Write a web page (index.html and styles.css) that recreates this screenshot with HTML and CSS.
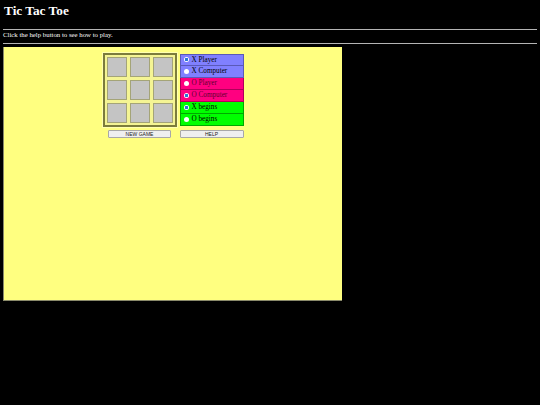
FILE: index.html
```html
<!DOCTYPE html>
<html>
<head>
<meta charset="utf-8">
<title>Tic Tac Toe</title>
<link rel="stylesheet" href="styles.css">
</head>
<body>
<h1 class="title">Tic Tac Toe</h1>
<hr class="rule">
<p class="intro">Click the help button to see how to play.</p>
<hr class="rule rule-2">
<div class="stage">
  <div class="game">
    <div class="board">
      <div class="cell"></div><div class="cell"></div><div class="cell"></div>
      <div class="cell"></div><div class="cell"></div><div class="cell"></div>
      <div class="cell"></div><div class="cell"></div><div class="cell"></div>
    </div>
    <div class="panel">
      <label class="opt opt-x"><span class="radio checked"></span>X Player</label>
      <label class="opt opt-x"><span class="radio"></span>X Computer</label>
      <label class="opt opt-o"><span class="radio"></span>O Player</label>
      <label class="opt opt-o"><span class="radio checked"></span>O Computer</label>
      <label class="opt opt-s"><span class="radio checked"></span>X begins</label>
      <label class="opt opt-s"><span class="radio"></span>O begins</label>
    </div>
    <button class="btn btn-new">NEW GAME</button>
    <button class="btn btn-help">HELP</button>
  </div>
</div>
</body>
</html>
```
FILE: styles.css
```css
html, body {
  background: #000;
}
body {
  margin: 0;
  padding: 3px 3px 0 3px;
  color: #fff;
  font-family: "Liberation Serif", "Times New Roman", serif;
}
.title {
  margin: 0 0 0 1px;
  font-size: 13.3px;
  font-weight: bold;
  line-height: 15.5px;
}
.rule {
  margin: 10px 0 0 0;
  height: 0;
  border: 0;
  border-top: 1px solid #b4b4b4;
}
.intro {
  margin: 1px 0 0 0;
  font-size: 6.8px;
  line-height: 8px;
}
.rule-2 {
  margin-top: 4px;
}
.stage {
  margin-top: 3px;
  width: 339px;
  height: 254px;
  background: #ffff80;
  border-left: 1px solid #8a8a6a;
  border-bottom: 1px solid #8a8a6a;
  padding-top: 6px;
  box-sizing: border-box;
}
.game {
  display: grid;
  grid-template-columns: 74px 64px;
  column-gap: 3px;
  row-gap: 3px;
  justify-content: center;
}
.board {
  box-sizing: border-box;
  width: 74px;
  height: 74px;
  border: 2px solid #7c7c3c;
  outline: 1px solid #ffffb0;
  background: #f4f494;
  padding: 2px;
  display: grid;
  grid-template-columns: repeat(3, 20px);
  grid-template-rows: repeat(3, 20px);
  gap: 3px;
}
.cell {
  box-sizing: border-box;
  background: #c4c4c4;
  border: 1px solid #a4a478;
}
.panel {
  margin-top: 1px;
  display: flex;
  flex-direction: column;
  width: 64px;
}
.opt {
  box-sizing: border-box;
  height: 12px;
  display: flex;
  align-items: center;
  padding-left: 3px;
  font-size: 7.2px;
  color: #000;
  border: 1px solid;
}
.opt + .opt {
  border-top: 0;
}
.opt-x {
  background: #8080ff;
  border-color: #5a5ab8;
}
.opt-o {
  background: #ff0080;
  border-color: #b0005a;
  color: #600030;
}
.opt-s {
  background: #00ff00;
  border-color: #00a800;
}
.radio {
  box-sizing: border-box;
  width: 5px;
  height: 5px;
  border-radius: 50%;
  background: #fff;
  margin-right: 3px;
  flex: none;
}
.radio.checked {
  background: radial-gradient(circle, #2a76d6 0 1.4px, #fff 1.8px);
}
.btn {
  box-sizing: border-box;
  height: 8px;
  padding: 0;
  margin: 0;
  border: 1px solid #a8a8a8;
  background: #efefef;
  color: #222;
  font-family: "Liberation Sans", Arial, sans-serif;
  font-size: 5px;
  line-height: 6px;
  border-radius: 1px;
}
.btn-new {
  width: 63px;
  justify-self: center;
}
.btn-help {
  width: 64px;
}
```
